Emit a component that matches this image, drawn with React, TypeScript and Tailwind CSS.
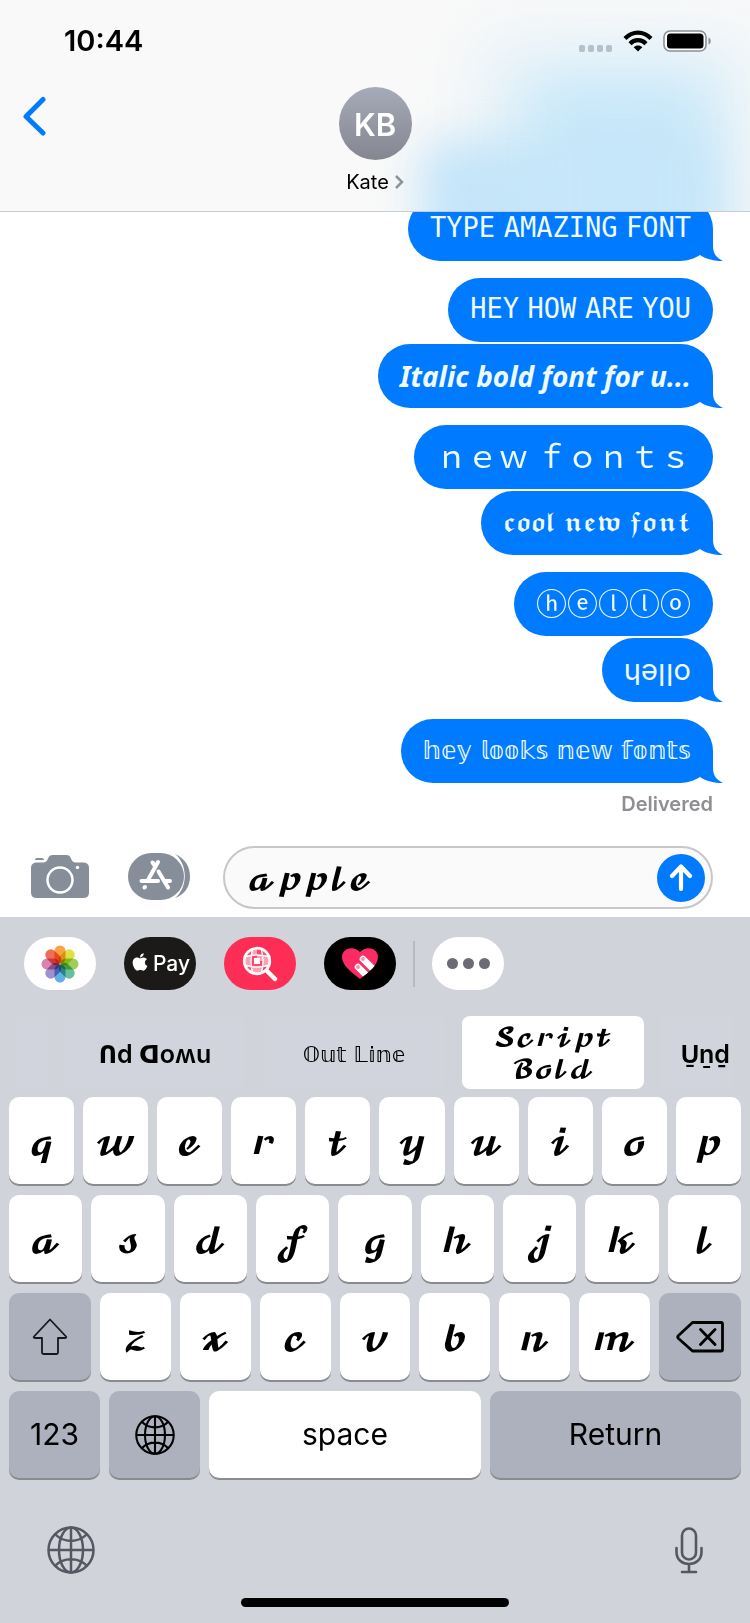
import { useState, type ReactNode } from "react";
import { FaApple } from "react-icons/fa";

type Message = { text: string; font: string; tail?: boolean };

const MONO = "font-['DejaVu_Math_TeX_Gyre','DejaVu_Sans_Mono',monospace] text-[27px] pt-[2px]";
const ITALIC = "font-['Noto_Sans',sans-serif] text-[28px] font-bold italic";
const WIDE = "font-['Noto_Sans_CJK_SC',sans-serif] text-[31px] pb-1";
const FRAKTUR = "font-['DejaVu_Sans','DejaVu_Math_TeX_Gyre',serif] text-[24px]";
const CIRCLED = "font-['Noto_Sans_CJK_SC',sans-serif] text-[31px] pb-1";
const FLIPPED = "font-[Inter,'DejaVu_Sans',sans-serif] text-[29px]";
const OUTLINE = "font-['DejaVu_Sans','DejaVu_Math_TeX_Gyre',sans-serif] text-[25px]";
const SCRIPT = "font-['DejaVu_Math_TeX_Gyre','DejaVu_Serif',cursive]";

// Messages sent close together share a group; only the last one has a tail.
const GROUPS: Message[][] = [
  [{ text: "𝚃𝚈𝙿𝙴 𝙰𝙼𝙰𝚉𝙸𝙽𝙶 𝙵𝙾𝙽𝚃", font: MONO, tail: true }],
  [
    { text: "𝙷𝙴𝚈 𝙷𝙾𝚆 𝙰𝚁𝙴 𝚈𝙾𝚄", font: MONO },
    { text: "Italic bold font for u...", font: ITALIC, tail: true },
  ],
  [
    { text: "ｎｅｗ ｆｏｎｔｓ", font: WIDE },
    { text: "𝖈𝖔𝖔𝖑 𝖓𝖊𝖜 𝖋𝖔𝖓𝖙", font: FRAKTUR, tail: true },
  ],
  [
    { text: "ⓗⓔⓛⓛⓞ", font: CIRCLED },
    { text: "ɥəןןo", font: FLIPPED, tail: true },
  ],
  [{ text: "𝕙𝕖𝕪 𝕝𝕠𝕠𝕜𝕤 𝕟𝕖𝕨 𝕗𝕠𝕟𝕥𝕤", font: OUTLINE, tail: true }],
];

const ROW_1 = ["𝓺", "𝔀", "𝓮", "𝓻", "𝓽", "𝔂", "𝓾", "𝓲", "𝓸", "𝓹"];
const ROW_2 = ["𝓪", "𝓼", "𝓭", "𝓯", "𝓰", "𝓱", "𝓳", "𝓴", "𝓵"];
const ROW_3 = ["𝔃", "𝔁", "𝓬", "𝓿", "𝓫", "𝓷", "𝓶"];

function Globe({ className }: { className: string }) {
  return (
    <svg viewBox="0 0 48 48" className={className} fill="none" stroke="currentColor" strokeWidth="2.5">
      <circle cx="24" cy="24" r="22.5" />
      <ellipse cx="24" cy="24" rx="12" ry="22.5" />
      <path d="M24 1.5v45M1.5 24h45M8.5 8.5c8 8.5 23 8.5 31 0M8.5 39.5c8-8.500 23-8.500 31 0" />
    </svg>
  );
}

function Bubble({ message }: { message: Message }) {
  return (
    <div
      className={`relative flex h-16 items-center rounded-[32px] bg-[#007aff] px-[22px] whitespace-pre text-[#effaff] ${message.font}`}
    >
      {message.text}
      {message.tail && (
        <svg viewBox="0 0 24 32" className="absolute -right-[10px] bottom-0 h-8 w-6 fill-[#007aff]">
          <path d="M0 8 14 0V17C14 25 18 29 24 32C15 32 7 30 1 26Z" />
        </svg>
      )}
    </div>
  );
}

function Key({
  children,
  label,
  dark,
  className = "",
  onClick,
}: {
  children: ReactNode;
  label?: string;
  dark?: boolean;
  className?: string;
  onClick?: () => void;
}) {
  return (
    <button
      type="button"
      aria-label={label}
      onClick={onClick}
      className={`flex h-[87px] min-w-0 items-center justify-center rounded-[10px] shadow-[0_2px_0_#898b90] ${
        dark ? "bg-[#adb1bd]" : "bg-white"
      } ${className}`}
    >
      {children}
    </button>
  );
}

function StatusBar() {
  return (
    <div className="relative flex h-[82px] items-center justify-between pr-[38px] pl-16">
      <span className="text-[29px] font-semibold">10:44</span>
      <div className="flex items-center gap-[10px]">
        <svg viewBox="0 0 34 7" className="mt-[14px] h-[7px] w-[34px] fill-[#b3c1c9]">
          <rect width="6" height="7" rx="2" />
          <rect x="9" width="6" height="7" rx="2" />
          <rect x="18" width="6" height="7" rx="2" />
          <rect x="27" width="6" height="7" rx="2" />
        </svg>
        <svg viewBox="0 0 30 22" className="h-[22px] w-[30px]" fill="none" stroke="#000" strokeWidth="4.2">
          <path d="M2 8.500C9.500 .600 20.500 .600 28 8.500" />
          <path d="M7 13.700C11.500 9 18.500 9 23 13.700" />
          <path d="M15 21.500 10.700 17.300C13 15 17 15 19.300 17.300Z" fill="#000" stroke="none" />
        </svg>
        <svg viewBox="0 0 49 22" className="h-[22px] w-[49px]">
          <rect x="1" y="1" width="42" height="20" rx="6" fill="#fff" stroke="#8a9096" strokeWidth="1.6" />
          <rect x="4" y="3.5" width="36.5" height="15" rx="3.5" />
          <path d="M45.500 7.500c3 1 3 6 0 7Z" fill="#8a9096" />
        </svg>
      </div>
    </div>
  );
}

function Header() {
  return (
    <header className="relative h-[212px] shrink-0 overflow-hidden border-b border-[#c9cdd1] bg-[#f9f9f9]">
      <div className="absolute top-10 right-0 h-60 w-[270px] bg-[#e4f2f9] blur-[32px]" />
      <div className="absolute top-[140px] right-10 h-40 w-[290px] rounded-3xl bg-[#c5e5f9] blur-[22px]" />
      <div className="absolute top-[80px] right-10 h-52 w-[180px] rounded-3xl bg-[#c6e7f9] blur-[28px]" />
      <StatusBar />
      <div className="relative grid grid-cols-[1fr_auto_1fr] px-5">
        <button type="button" aria-label="Back" className="mt-[14px] h-10 w-7">
          <svg viewBox="0 0 28 40" className="h-10 w-7" fill="none" stroke="#007aff" strokeWidth="5" strokeLinecap="round" strokeLinejoin="round">
            <path d="M23 3.500 6 20.500 23 37" />
          </svg>
        </button>
        <div className="flex flex-col items-center pt-[5px]">
          <div className="flex size-[73px] items-center justify-center rounded-full bg-linear-to-b from-[#a5abb9] to-[#858690] pt-1 text-[31px] font-semibold text-white">
            KB
          </div>
          <button type="button" className="mt-2 flex items-center gap-[6px] text-[20px] leading-7">
            Kate
            <svg viewBox="0 0 9 14" className="h-[14px] w-[9px]" fill="none" stroke="#8a949c" strokeWidth="2.5">
              <path d="M1 1l6 6-6 6" />
            </svg>
          </button>
        </div>
      </div>
    </header>
  );
}

function Composer({ value, onChange }: { value: string; onChange: (v: string) => void }) {
  return (
    <div className="flex h-[71px] shrink-0 items-start pr-[37px] pl-[30px]">
      <button type="button" aria-label="Camera" className="mt-2">
        <svg viewBox="0 0 60 46" className="h-[46px] w-[60px]">
          <path
            fill="#868e99"
            d="M7 8.500H13C16 8.500 17 7 18 4.500 19 2 20 1 23 1H36C39 1 40 2 41 4.500 42 7 43 8.500 46 8.500H53Q59 8.500 59 14V38.500Q59 44 53 44H7Q1 44 1 38.500V14Q1 8.500 7 8.500ZM7 4h5q2 0 2 2H5q0-2 2-2Z"
          />
          <circle cx="30" cy="26" r="12.5" fill="none" stroke="#fff" strokeWidth="2.5" />
          <circle cx="47.5" cy="13.5" r="1.7" fill="#fff" />
        </svg>
      </button>
      <button type="button" aria-label="App Store" className="mt-[6px] ml-[38px]">
        <svg viewBox="0 0 64 48" className="h-12 w-16" strokeLinecap="round">
          <rect x="0" y="1" width="56" height="47" rx="23.5" fill="#868e99" />
          <path d="M47 2C67 10 67 39 47 46C60 36 60 12 47 2Z" fill="#868e99" />
          <g stroke="#fff" strokeWidth="4" fill="none">
            <path d="M30 10 20 28M24.500 10.500 27 14M13.500 29H30M36 29H42M16.500 35.500 17 35M30.500 19.500 40 35.500" />
          </g>
        </svg>
      </button>
      <label className="ml-[31px] flex h-[63px] min-w-0 flex-1 items-center rounded-full border-2 border-[#c6c6cb] bg-[#fafafa] pr-[6px] pl-[22px]">
        <input
          aria-label="Message"
          value={value}
          onChange={(e) => onChange(e.target.value)}
          className={`h-full min-w-0 flex-1 bg-transparent pt-1 text-[30px] outline-none ${SCRIPT}`}
        />
        <button type="button" aria-label="Send" className="flex size-12 items-center justify-center rounded-full bg-[#007aff]">
          <svg viewBox="0 0 24 28" className="h-7 w-6" fill="none" stroke="#fff" strokeWidth="4.2" strokeLinecap="round" strokeLinejoin="round">
            <path d="M12 25V3M3 12l9-9.500 9 9.500" />
          </svg>
        </button>
      </label>
    </div>
  );
}

const PETALS = ["#f7941e", "#d9dc1f", "#8ec640", "#4bb58f", "#4a9fe0", "#8f7cc4", "#cf6f9f", "#f0523d"];

const HEART = "M19 32C10 25 1 18 1 10 1 1 13-2 19 5 25-2 37 1 37 10 37 18 28 25 19 32Z";

function AppStrip() {
  const pill = "flex h-[53px] w-[72px] items-center justify-center rounded-full";
  return (
    <div className="flex items-center pt-5 pl-6">
      <div className="flex gap-7">
        <button type="button" aria-label="Photos" className={`${pill} bg-white`}>
          <svg viewBox="0 0 38 38" className="size-[38px]">
            {PETALS.map((color, i) => (
              <rect
                key={color}
                x="13.5"
                y="0.5"
                width="11"
                height="18"
                rx="5.5"
                fill={color}
                opacity="0.85"
                transform={`rotate(${i * 45} 19 19)`}
                style={{ mixBlendMode: "multiply" }}
              />
            ))}
          </svg>
        </button>
        <button type="button" className={`${pill} gap-[3px] bg-[#1b1a18] text-[21px] font-medium text-white`}>
          <FaApple className="mb-1 size-5" />
          Pay
        </button>
        <button type="button" aria-label="Image search" className={`${pill} bg-[#fd2d55]`}>
          <svg viewBox="0 0 36 36" className="size-9" stroke="#fff" fill="none">
            <clipPath id="lens">
              <circle cx="15" cy="15" r="12" />
            </clipPath>
            <g clipPath="url(#lens)" stroke="none">
              <rect width="30" height="30" fill="#fd4a6c" />
              <path d="M9 2h6v7H9zM3 9h6v6H3zM15 9h6v6h-6zM21 15h6v6h-6zM9 15h0zM3 15h6v6H3zM15 21h6v6h-6zM21 9h6v6h-6zM9 21h6v6H9z" fill="#fba3b5" />
              <rect x="12" y="12" width="6" height="6" fill="#fff" />
            </g>
            <g clipPath="url(#lens)" strokeWidth="1.3">
              <path d="M11 2Q7 15 11 28M19 2Q23 15 19 28M2 11Q15 7 28 11M2 19Q15 23 28 19" />
            </g>
            <circle cx="15" cy="15" r="12.8" strokeWidth="2.7" />
            <path d="M25 25l8 8" strokeWidth="4.5" strokeLinecap="round" />
          </svg>
        </button>
        <button type="button" aria-label="Digital Touch" className={`${pill} bg-black`}>
          <svg viewBox="0 0 38 33" className="h-[33px] w-[38px]">
            <clipPath id="heart">
              <path d={HEART} />
            </clipPath>
            <path d={HEART} fill="#fc2b63" />
            <g clipPath="url(#heart)" stroke="#fff" strokeWidth="6.6" strokeLinecap="round">
              <path d="M17 20l16 16M22 12l16 16" />
            </g>
            <circle cx="17" cy="20" r="1.9" fill="#f98caa" />
            <circle cx="22" cy="12" r="1.9" fill="#f98caa" />
          </svg>
        </button>
      </div>
      <div className="mx-[17px] h-[46px] w-[2px] bg-[#b7bac0]" />
      <button type="button" aria-label="More" className={`${pill} gap-[5px] bg-white`}>
        <span className="size-[11px] rounded-full bg-[#6b6b75]" />
        <span className="size-[11px] rounded-full bg-[#6b6b75]" />
        <span className="size-[11px] rounded-full bg-[#6b6b75]" />
      </button>
    </div>
  );
}

function FontPicker() {
  const chip = "flex h-[73px] w-[182px] shrink-0 items-center justify-center rounded-lg pt-1";
  return (
    <div className="mx-[17px] mt-[26px] flex gap-[17px] overflow-hidden">
      <div className="h-[73px] w-[30px] shrink-0 bg-[#d1d4dc]" />
      <button type="button" className={`${chip} bg-[#d1d4dc] font-[Inter,'DejaVu_Sans',sans-serif] text-[25px] font-semibold`}>
        Ոd ᗡoʍu
      </button>
      <button type="button" className={`${chip} bg-[#d1d4dc] font-['DejaVu_Sans','DejaVu_Math_TeX_Gyre',sans-serif] text-[22px]`}>
        𝕆𝕦𝕥 𝕃𝕚𝕟𝕖
      </button>
      <button type="button" className={`${chip} bg-white px-6 text-[25px] leading-8 ${SCRIPT}`}>
        𝓢𝓬𝓻𝓲𝓹𝓽 𝓑𝓸𝓵𝓭
      </button>
      <button type="button" className="flex h-[73px] min-w-0 flex-1 items-center bg-[#d1d4dc] pt-1 pl-5 text-[25px] font-semibold">
        U̱ṉḏ
      </button>
    </div>
  );
}

function Keyboard({ onType, onDelete }: { onType: (s: string) => void; onDelete: () => void }) {
  const letters = (row: string[]) =>
    row.map((c) => (
      <Key key={c} onClick={() => onType(c)} className={`flex-1 pt-2 text-[33px] ${SCRIPT}`}>
        {c}
      </Key>
    ));
  return (
    <section className="shrink-0 bg-[#d0d3da]">
      <AppStrip />
      <FontPicker />
      <div className="flex flex-col gap-[11px] px-[9px] pt-2">
        <div className="flex gap-[9px]">{letters(ROW_1)}</div>
        <div className="flex gap-[9px]">{letters(ROW_2)}</div>
        <div className="flex gap-[9px]">
          <Key dark label="Shift" className="w-[82px] shrink-0">
            <svg viewBox="0 0 36 38" className="h-[38px] w-9" fill="none" stroke="#15171a" strokeWidth="1.8" strokeLinejoin="round">
              <path d="M18 1.500 34 18.500Q35 20 33 20H26V34.500Q26 36 24.500 36H11.500Q10 36 10 34.500V20H3Q1 20 2 18.500Z" />
            </svg>
          </Key>
          {letters(ROW_3)}
          <Key dark label="Delete" onClick={onDelete} className="w-[82px] shrink-0">
            <svg viewBox="0 0 48 32" className="h-8 w-12" fill="none" stroke="#000" strokeWidth="2.8" strokeLinecap="round" strokeLinejoin="round">
              <path d="M16.500 1.500H45Q46.500 1.500 46.500 3V28.500Q46.500 30 45 30H16.500L2.500 17.500Q1 16 2.500 14.500ZM24.500 8.500 39 23.500M39 8.500 24.500 23.500" />
            </svg>
          </Key>
        </div>
        <div className="flex gap-[9px] text-[30px]">
          <Key dark className="w-[91px]">123</Key>
          <Key dark label="Next keyboard" className="w-[91px]">
            <Globe className="size-10" />
          </Key>
          <Key onClick={() => onType(" ")} className="w-[272px]">space</Key>
          <Key dark className="flex-1">Return</Key>
        </div>
      </div>
      <div className="flex items-center justify-between pt-12 pr-[46px] pl-[47px] text-[#555862]">
        <button type="button" aria-label="Switch language">
          <Globe className="size-12" />
        </button>
        <button type="button" aria-label="Dictate">
          <svg viewBox="0 0 30 48" className="h-12 w-[30px]" fill="none" stroke="currentColor" strokeWidth="2.6" strokeLinecap="round">
            <rect x="8" y="2.5" width="14" height="31" rx="7" />
            <path d="M2.500 22v4c0 16 25 16 25 0v-4M15 38v7M8 46h14" />
          </svg>
        </button>
      </div>
      <div className="flex justify-center pt-6 pb-4">
        <div className="h-[9px] w-[268px] rounded-full bg-black" />
      </div>
    </section>
  );
}

export default function App() {
  const [draft, setDraft] = useState("𝓪𝓹𝓹𝓵𝓮");

  return (
    <div className="flex h-screen flex-col bg-white font-[Inter,sans-serif] text-black">
      <Header />
      <main className="flex min-h-0 flex-1 flex-col items-end justify-end gap-[17px] overflow-hidden">
        {GROUPS.map((group) => (
          <div key={group[0].text} className="flex shrink-0 flex-col items-end gap-[2px] pr-[37px]">
            {group.map((m) => (
              <Bubble key={m.text} message={m} />
            ))}
          </div>
        ))}
        <p className="-mt-[10px] mb-7 pr-[37px] text-[20px] leading-7 font-semibold text-[#8e8e93]">Delivered</p>
      </main>
      <Composer value={draft} onChange={setDraft} />
      <Keyboard onType={(s) => setDraft(draft + s)} onDelete={() => setDraft([...draft].slice(0, -1).join(""))} />
    </div>
  );
}
